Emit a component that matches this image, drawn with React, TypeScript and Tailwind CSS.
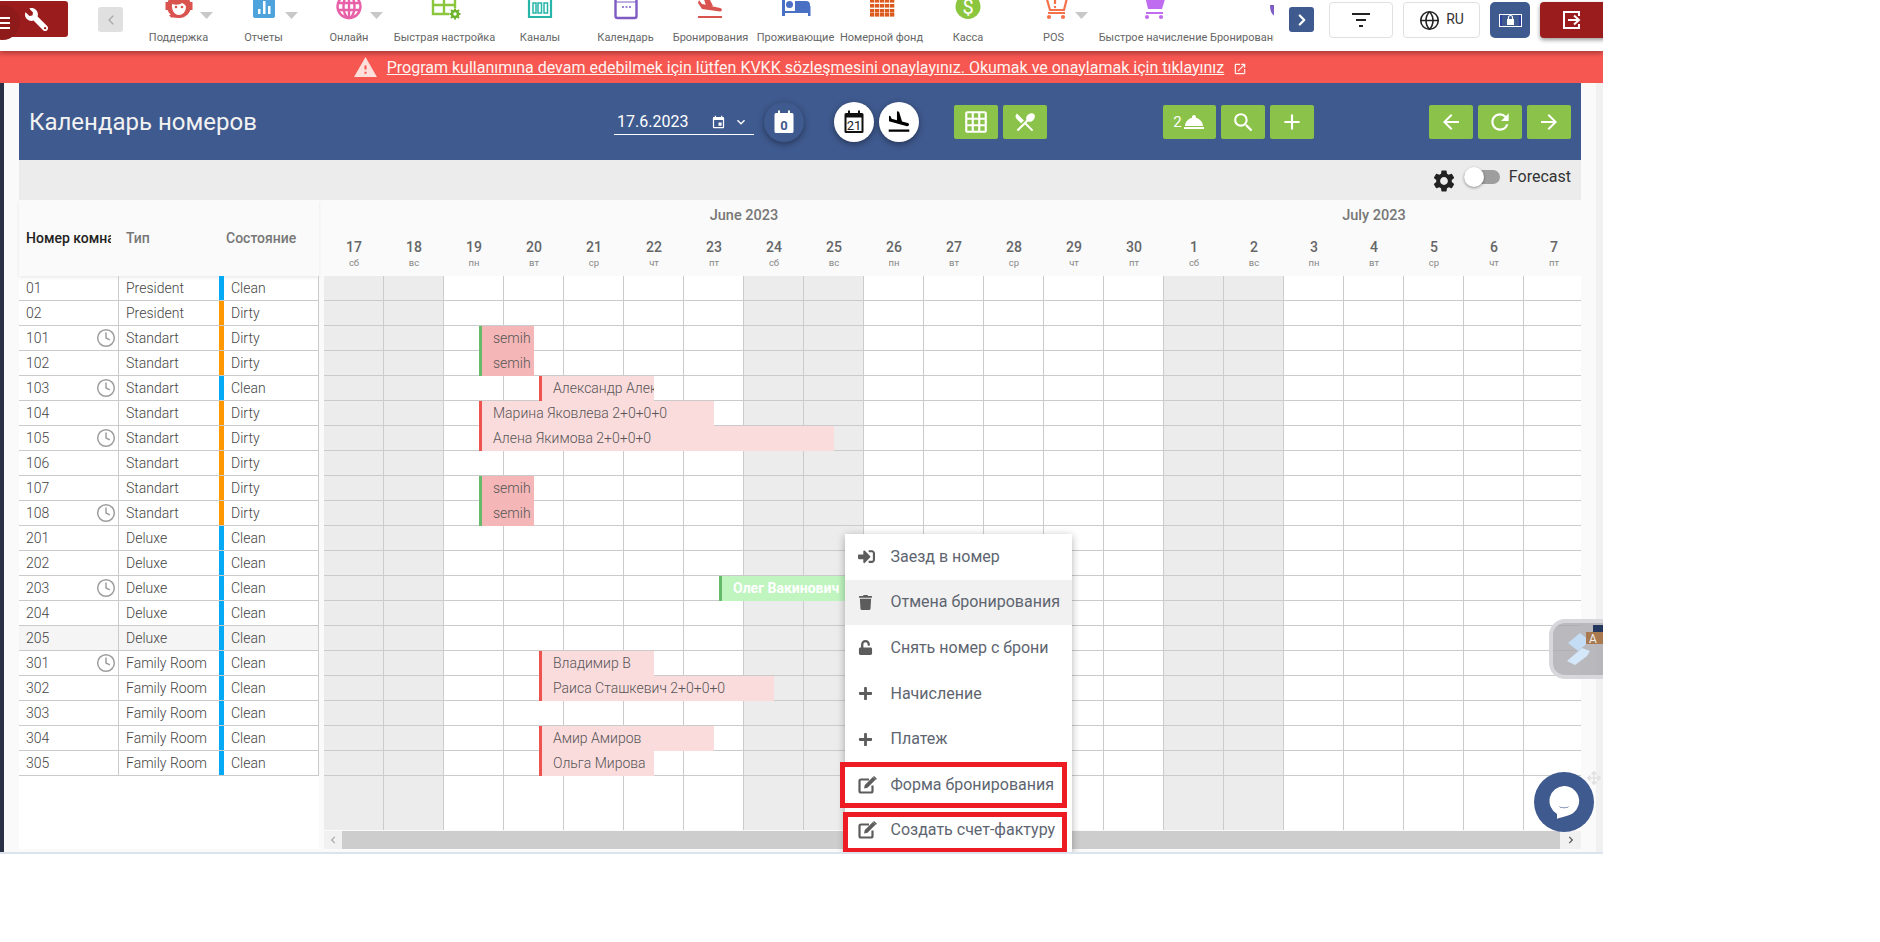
import React from "react";
import { Clock, Globe, ChevronLeft, ChevronRight } from "lucide-react";
import { FaSignInAlt, FaTrash, FaUnlock, FaPlus, FaArrowsAlt, FaChevronLeft, FaChevronRight, FaWrench } from "react-icons/fa";
import { MdFlightLand, MdGridOn, MdLocalDining, MdRoomService, MdSearch, MdAdd, MdArrowBack, MdRefresh, MdArrowForward, MdSettings, MdWarning, MdOpenInNew, MdEvent, MdKeyboardArrowDown } from "react-icons/md";

const Svg = ({ children }: { children: React.ReactNode }) => (
  <svg width="36" height="22" viewBox="0 0 36 22" className="block">{children}</svg>
);

const icons = {
  support: (
    <Svg>
      <circle cx="18" cy="6" r="12" fill="#d9534f" />
      <path d="M11 4c3 1 8 1 10-1 2 1 4 2 4 4a7 8 0 0 1-14 0z" fill="#fff" />
      <circle cx="15" cy="7" r="1.3" fill="#d9534f" /><circle cx="21" cy="7" r="1.3" fill="#d9534f" />
      <path d="M4.500 2h3v8h-3zM28.500 2h3v8h-3z" fill="#d9534f" />
      <path d="M8 15h11l1 2.500H10z" fill="#d9534f" />
    </Svg>
  ),
  reports: (
    <Svg>
      <rect x="7" y="-6" width="22" height="24" rx="2" fill="#4ea3dd" />
      <rect x="12" y="9" width="2.5" height="5" fill="#fff" /><rect x="17" y="1" width="2.5" height="13" fill="#fff" /><rect x="22" y="6" width="2.5" height="8" fill="#fff" />
    </Svg>
  ),
  online: (
    <Svg>
      <g fill="none" stroke="#e860a8" strokeWidth="2.4">
        <circle cx="18" cy="6.5" r="11.5" /><ellipse cx="18" cy="6.5" rx="5.5" ry="11.5" />
        <path d="M7 3h22M7 10h22M18-5v23" />
      </g>
    </Svg>
  ),
  setup: (
    <Svg>
      <g fill="none" stroke="#8cc63f" strokeWidth="2.4">
        <path d="M6-4h22v18H6zM6 5h22M17-4v18" />
      </g>
      <circle cx="28" cy="14" r="6" fill="#fff" />
      <circle cx="28" cy="14" r="3" fill="none" stroke="#6fb52c" strokeWidth="2.6" />
      <path d="M28 8.500v2M28 17.500v2M22.500 14h2M31.500 14h2M24 10l1.500 1.500M30.500 16.500l1.500 1.500M32 10l-1.500 1.500M25.500 16.500L24 18" stroke="#6fb52c" strokeWidth="2" />
    </Svg>
  ),
  channels: (
    <Svg>
      <path d="M7-4h22v21H7z" fill="none" stroke="#26b5a8" strokeWidth="2.2" />
      <path d="M11 3h3v10h-3zM16 3h3.500v10H16zM22 3h3.500v10H22z" fill="none" stroke="#26b5a8" strokeWidth="1.500" />
    </Svg>
  ),
  calendar: (
    <Svg>
      <rect x="7.500" y="-4" width="21" height="22" rx="2" fill="#fff" stroke="#7e5cc4" strokeWidth="2.400" />
      <path d="M7.500 2h21" stroke="#7e5cc4" strokeWidth="1" />
      <path d="M14 7h2M17.500 7h2M21 7h2" stroke="#7e5cc4" strokeWidth="1.600" />
    </Svg>
  ),
  booking: (
    <Svg>
      <path d="M6 0l3 4 18 4c2.500.500 2.500 3.500 0 3.500L9 9 5 3z" fill="#d9534f" />
      <path d="M10-4h5l5 10h-7z" fill="#d9534f" />
      <rect x="5" y="16" width="24" height="2" fill="#d9534f" />
    </Svg>
  ),
  residents: (
    <Svg>
      <path d="M4-2h3v18H4zM30 6h2.500v10H30z" fill="#4a70c4" />
      <circle cx="11.500" cy="4.500" r="3.500" fill="#4a70c4" />
      <path d="M17 1h11a4 4 0 0 1 4 4v6H17z" fill="#4a70c4" />
      <rect x="4" y="11" width="28" height="2" fill="#4a70c4" />
    </Svg>
  ),
  fund: (
    <Svg>
      <g fill="#dd5a1e">
        {[-1, 4, 9, 13].flatMap((y) => [6, 11, 16, 21, 26].map((x) => <rect key={x + "-" + y} x={x} y={y} width="4.300" height="3.600" />))}
      </g>
    </Svg>
  ),
  cash: (
    <Svg>
      <circle cx="18" cy="6.500" r="12.500" fill="#8cc63f" />
      <text x="18" y="14" textAnchor="middle" fontSize="20" fill="#fff" fontFamily="Roboto">$</text>
    </Svg>
  ),
  pos: (
    <Svg>
      <path d="M7-4h3l4 14h14l3-12" fill="none" stroke="#f4714a" strokeWidth="2.200" />
      <path d="M12 13h17" stroke="#f4714a" strokeWidth="2" />
      <circle cx="13" cy="17" r="2.100" fill="#f4714a" /><circle cx="27" cy="17" r="2.100" fill="#f4714a" />
      <path d="M19-2v6" stroke="#f4714a" strokeWidth="2.200" /><circle cx="19" cy="7" r="1.200" fill="#f4714a" />
    </Svg>
  ),
  charge: (
    <Svg>
      <path d="M10-4h21l-4 13H13z" fill="#c06cf0" />
      <path d="M11 13h17" stroke="#c06cf0" strokeWidth="2" />
      <circle cx="12" cy="17" r="2.100" fill="#c06cf0" /><circle cx="26" cy="17" r="2.100" fill="#c06cf0" />
    </Svg>
  ),
};

const tools: { label: string; w: number; icon: React.ReactNode; caret?: boolean }[] = [
  { label: "Поддержка", w: 85, icon: icons.support, caret: true },
  { label: "Отчеты", w: 85, icon: icons.reports, caret: true },
  { label: "Онлайн", w: 86, icon: icons.online, caret: true },
  { label: "Быстрая настройка", w: 105, icon: icons.setup },
  { label: "Каналы", w: 86, icon: icons.channels },
  { label: "Календарь", w: 85, icon: icons.calendar },
  { label: "Бронирования", w: 85, icon: icons.booking },
  { label: "Проживающие", w: 85, icon: icons.residents },
  { label: "Номерной фонд", w: 87, icon: icons.fund },
  { label: "Касса", w: 86, icon: icons.cash },
  { label: "POS", w: 85, icon: icons.pos, caret: true },
  { label: "Быстрое начисление", w: 114, icon: icons.charge },
];

type Room = { no: string; type: string; state: string; clock?: boolean };
const rooms: Room[] = [
  { no: "01", type: "President", state: "Clean" },
  { no: "02", type: "President", state: "Dirty" },
  { no: "101", type: "Standart", state: "Dirty", clock: true },
  { no: "102", type: "Standart", state: "Dirty" },
  { no: "103", type: "Standart", state: "Clean", clock: true },
  { no: "104", type: "Standart", state: "Dirty" },
  { no: "105", type: "Standart", state: "Dirty", clock: true },
  { no: "106", type: "Standart", state: "Dirty" },
  { no: "107", type: "Standart", state: "Dirty" },
  { no: "108", type: "Standart", state: "Dirty", clock: true },
  { no: "201", type: "Deluxe", state: "Clean" },
  { no: "202", type: "Deluxe", state: "Clean" },
  { no: "203", type: "Deluxe", state: "Clean", clock: true },
  { no: "204", type: "Deluxe", state: "Clean" },
  { no: "205", type: "Deluxe", state: "Clean" },
  { no: "301", type: "Family Room", state: "Clean", clock: true },
  { no: "302", type: "Family Room", state: "Clean" },
  { no: "303", type: "Family Room", state: "Clean" },
  { no: "304", type: "Family Room", state: "Clean" },
  { no: "305", type: "Family Room", state: "Clean" },
];

type Booking = { row: number; x: number; w: number; text: string; kind: "semih" | "red" | "green" };
const bookings: Booking[] = [
  { row: 2, x: 155, w: 55, text: "semih", kind: "semih" },
  { row: 3, x: 155, w: 55, text: "semih", kind: "semih" },
  { row: 4, x: 215, w: 115, text: "Александр Александров", kind: "red" },
  { row: 5, x: 155, w: 235, text: "Марина Яковлева 2+0+0+0", kind: "red" },
  { row: 6, x: 155, w: 355, text: "Алена Якимова 2+0+0+0", kind: "red" },
  { row: 8, x: 155, w: 55, text: "semih", kind: "semih" },
  { row: 9, x: 155, w: 55, text: "semih", kind: "semih" },
  { row: 12, x: 395, w: 175, text: "Олег Вакинович", kind: "green" },
  { row: 15, x: 215, w: 115, text: "Владимир В", kind: "red" },
  { row: 16, x: 215, w: 235, text: "Раиса Сташкевич 2+0+0+0", kind: "red" },
  { row: 18, x: 215, w: 175, text: "Амир Амиров", kind: "red" },
  { row: 19, x: 215, w: 115, text: "Ольга Мирова", kind: "red" },
];

const weekdays = ["сб", "вс", "пн", "вт", "ср", "чт", "пт"];
const days = [...Array.from({ length: 14 }, (_, i) => 17 + i), ...Array.from({ length: 7 }, (_, i) => 1 + i)].map((d, i) => ({
  d,
  wd: weekdays[i % 7],
  weekend: i % 7 < 2,
}));

const EditIcon = () => (
  <svg width="19" height="18" viewBox="0 0 19 18">
    <path d="M11 3.500H3A1.500 1.500 0 0 0 1.500 5v10A1.500 1.500 0 0 0 3 16.500h10a1.500 1.500 0 0 0 1.500-1.500V9.500" fill="none" stroke="currentColor" strokeWidth="2.200" />
    <path d="M6 12.500l.800-3.500 8-8 2.700 2.700-8 8z" fill="currentColor" />
    <path d="M15.500.500l2.900 2.900" stroke="currentColor" strokeWidth="1.500" />
  </svg>
);

const menu = [
  { icon: <FaSignInAlt size={17} />, label: "Заезд в номер" },
  { icon: <FaTrash size={15} />, label: "Отмена бронирования", active: true },
  { icon: <FaUnlock size={15} />, label: "Снять номер с брони" },
  { icon: <FaPlus size={15} />, label: "Начисление" },
  { icon: <FaPlus size={15} />, label: "Платеж" },
  { icon: <EditIcon />, label: "Форма бронирования" },
  { icon: <EditIcon />, label: "Создать счет-фактуру" },
];

const GreenBtn = ({ children, wide }: { children: React.ReactNode; wide?: boolean }) => (
  <div className={`flex h-[34px] items-center justify-center rounded-[2px] bg-[#8bc34a] text-white ${wide ? "w-[53px]" : "w-[44px]"}`}>{children}</div>
);

const CalIcon = ({ label, color, textColor, weight, size }: { label: string; color: string; textColor: string; weight: number; size: number }) => (
  <svg width="20" height="24" viewBox="0 0 20 24">
    <path d="M2 3h16a1.500 1.500 0 0 1 1.500 1.500v17a1.500 1.500 0 0 1-1.500 1.500H2a1.500 1.500 0 0 1-1.500-1.500v-17A1.500 1.500 0 0 1 2 3z" fill={color} />
    <rect x="4" y="0.500" width="2" height="4" fill={color} /><rect x="14" y="0.500" width="2" height="4" fill={color} />
    <rect x="2.500" y="7.500" width="15" height="13.500" fill="#fff" />
    <text x="10" y="19.500" textAnchor="middle" fontSize={size} fontWeight={weight} fontFamily="Roboto" fill={textColor}>{label}</text>
  </svg>
);

export default function App() {
  return (
    <div className="relative h-[942px] w-[1880px] overflow-hidden bg-white font-['Roboto',sans-serif]">
      <div className="relative flex h-[854px] w-[1603px] flex-col overflow-hidden border-b-2 border-[#dbe4ee] bg-[#fafafa]">
        {/* toolbar */}
        <header className="relative z-20 flex h-[51px] shrink-0 items-start bg-white shadow-[0_2px_5px_rgba(0,0,0,0.35)]">
          <div className="mt-px flex h-[36px] w-[68px] shrink-0 items-center justify-end rounded-r-[3px] bg-[#9b1c1c] pr-[20px] text-white">
            <FaWrench size={23} className="-scale-x-100" />
          </div>
          <div className="ml-[30px] mt-[7px] flex h-[25px] w-[25px] shrink-0 items-center justify-center rounded-[3px] bg-[#e0e0e0] text-[#aaa]">
            <ChevronLeft size={16} />
          </div>
          <div className="ml-[13px] flex h-[51px] w-[1138px] shrink-0 overflow-hidden">
            {tools.map((t) => (
              <div key={t.label} className="relative shrink-0" style={{ width: t.w }}>
                <div className="flex h-[22px] justify-center">{t.icon}</div>
                {t.caret && (
                  <svg width="13" height="7" viewBox="0 0 13 7" className="absolute left-[calc(50%+21px)] top-[12px]"><path d="M0 0h13L6.500 7z" fill="#c8c8c8" /></svg>
                )}
                <div className="mt-[9px] whitespace-nowrap text-center text-[11px] leading-[14px] text-[#666]">{t.label}</div>
              </div>
            ))}
            <div className="relative w-[64px] shrink-0 overflow-hidden">
              <svg width="8" height="22" viewBox="0 0 8 22" className="ml-[60px] block"><path d="M0 5h5v11C2 15 0 11 0 5z" fill="#7e5cc4" /></svg>
              <div className="mt-[9px] whitespace-nowrap text-[11px] leading-[14px] text-[#666]">Бронирования</div>
            </div>
          </div>
          <div className="ml-[15px] mt-[7px] flex h-[25px] w-[25px] shrink-0 items-center justify-center rounded-[3px] bg-[#3f5a8f] text-white">
            <ChevronRight size={18} strokeWidth={3} />
          </div>
          <div className="ml-[15px] mt-[2px] flex h-[36px] w-[64px] shrink-0 items-center justify-center rounded-[4px] border border-[#e0e0e0]">
            <svg width="18" height="14" viewBox="0 0 18 14"><path d="M0 0h18v2H0zM4 6h10v2H4zM7 12h4v2H7z" fill="#222" /></svg>
          </div>
          <div className="ml-[10px] mt-[2px] flex h-[36px] w-[77px] shrink-0 items-center justify-center gap-[6px] rounded-[4px] border border-[#e0e0e0] text-[14px] text-[#333]">
            <Globe size={21} strokeWidth={1.800} className="text-[#222]" />
            <span className="mb-[2px]">RU</span>
          </div>
          <div className="ml-[10px] mt-[2px] flex h-[36px] w-[40px] shrink-0 items-center justify-center rounded-[5px] bg-[#3f5a8f]">
            <svg width="23" height="13" viewBox="0 0 23 13"><rect width="23" height="13" fill="#fff" /><rect x="1" y="1" width="21" height="11" fill="#2f3f9f" /><rect x="3" y="1" width="17" height="11" fill="#3f5a8f" /><rect x="8" y="5" width="7" height="6" fill="#fff" /><path d="M9.500 5V3.500a2 2 0 0 1 4 0V5" fill="none" stroke="#fff" strokeWidth="1.200" /></svg>
          </div>
          <div className="ml-[10px] mt-[2px] flex h-[36px] w-[70px] shrink-0 items-center rounded-[4px] bg-[#9b1c1c] pl-[23px] shadow-[0_2px_4px_rgba(0,0,0,0.4)]">
            <svg width="18" height="18" viewBox="0 0 18 18"><path d="M16 5V1H1v16h15v-4" fill="none" stroke="#fff" strokeWidth="2" /><path d="M5 9h11M11 4.500 16 9l-5 4.500" fill="none" stroke="#fff" strokeWidth="2" /></svg>
          </div>
        </header>

        {/* hamburger */}
        <div className="absolute left-[-15px] top-[5px] z-30 flex h-[35px] w-[35px] flex-col items-end justify-center gap-[3px] rounded-full bg-[#8f1a1a] pr-[10px]">
          <span className="block h-[2px] w-[10px] bg-white" />
          <span className="block h-[2px] w-[10px] bg-white" />
          <span className="block h-[2px] w-[10px] bg-white" />
        </div>

        {/* banner */}
        <div className="flex h-[32px] shrink-0 items-center justify-center bg-[#f65751] pr-[3px] pt-[1px] text-[#fff3f0]">
          <MdWarning size={25} className="mr-[9px] text-[#fde0dc]" />
          <span className="whitespace-nowrap text-[16px] font-normal leading-[20px] underline">Program kullanımına devam edebilmek için lütfen KVKK sözleşmesini onaylayınız. Okumak ve onaylamak için tıklayınız</span>
          <MdOpenInNew size={14} className="ml-[9px] mt-[2px]" />
        </div>

        {/* body */}
        <div className="flex min-h-0 flex-1">
          <div className="w-[4px] shrink-0 bg-[#2a3045]" />
          <main className="ml-[15px] w-[1562px] shrink-0">
            {/* blue header */}
            <div className="flex h-[77px] bg-[#3f5a8f] pl-[10px] text-white">
              <h1 className="mt-[23px] w-[585px] shrink-0 text-[24px] font-normal leading-[32px] text-[#f2f2f2]">Календарь номеров</h1>
              <div className="mt-[21px] flex h-[31px] w-[140px] shrink-0 items-center border-b border-white pl-[3px] pt-[6px] text-[16px]">
                <span>17.6.2023</span>
                <MdEvent size={15} className="ml-[23px]" />
                <MdKeyboardArrowDown size={16} className="ml-[7px]" />
              </div>
              <div className="ml-[10px] mt-[19px] flex h-[40px] w-[40px] shrink-0 items-center justify-center rounded-full bg-[#3f5a8f] shadow-[0_2px_6px_rgba(0,0,0,0.4)]">
                <CalIcon label="0" color="#fff" textColor="#3f5a8f" weight={700} size={13} />
              </div>
              <div className="ml-[30px] mt-[19px] flex h-[40px] w-[40px] shrink-0 items-center justify-center rounded-full bg-white shadow-[0_2px_6px_rgba(0,0,0,0.4)]">
                <CalIcon label="21" color="#111" textColor="#222" weight={400} size={13} />
              </div>
              <div className="ml-[5px] mt-[19px] flex h-[40px] w-[40px] shrink-0 items-center justify-center rounded-full bg-white text-black shadow-[0_2px_6px_rgba(0,0,0,0.4)]">
                <MdFlightLand size={26} />
              </div>
              <div className="ml-[35px] mt-[22px] flex shrink-0 gap-[5px]">
                <GreenBtn><MdGridOn size={26} /></GreenBtn>
                <GreenBtn><MdLocalDining size={24} /></GreenBtn>
              </div>
              <div className="ml-[116px] mt-[22px] flex shrink-0 gap-[5px]">
                <GreenBtn wide><span className="text-[15px]">2</span><MdRoomService size={24} /></GreenBtn>
                <GreenBtn><MdSearch size={25} /></GreenBtn>
                <GreenBtn><MdAdd size={26} /></GreenBtn>
              </div>
              <div className="ml-[115px] mt-[22px] flex shrink-0 gap-[5px]">
                <GreenBtn><MdArrowBack size={24} /></GreenBtn>
                <GreenBtn><MdRefresh size={26} /></GreenBtn>
                <GreenBtn><MdArrowForward size={24} /></GreenBtn>
              </div>
            </div>

            {/* gray bar */}
            <div className="flex h-[40px] items-start justify-end bg-[#ececec] pr-[10px]">
              <MdSettings size={26} className="mr-[7px] mt-[8px] text-[#222]" />
              <div className="relative mr-[9px] mt-[10px] h-[14px] w-[36px] rounded-full bg-[#9e9e9e]">
                <span className="absolute left-0 top-[-3px] h-[20px] w-[20px] rounded-full bg-white shadow-[0_1px_3px_rgba(0,0,0,0.4)]" />
              </div>
              <span className="mt-[7px] text-[16px] leading-[20px] text-[#333]">Forecast</span>
            </div>

            <div className="flex">
              {/* rooms table */}
              <div className="w-[300px] shrink-0 bg-white">
                <div className="flex h-[76px] items-center bg-[#fafafa] text-[14px] font-medium text-[#777] shadow-[0_2px_3px_rgba(0,0,0,0.08)]">
                  <div className="w-[92px] shrink-0 overflow-hidden whitespace-nowrap pl-[7px] text-[#222]">Номер комнаты</div>
                  <div className="ml-[15px] w-[100px] shrink-0">Тип</div>
                  <div>Состояние</div>
                </div>
                {rooms.map((r) => (
                  <div key={r.no} className={`flex h-[25px] border-b border-[#cbcbcb] text-[14px] font-light text-[#444] ${r.no === "205" ? "bg-[#f5f5f5]" : ""}`}>
                    <div className="flex w-[100px] shrink-0 items-center justify-between border-r border-[#cbcbcb] pl-[7px] pr-[2px]">
                      <span>{r.no}</span>
                      {r.clock && <Clock size={20} strokeWidth={1.800} className="text-[#9e9e9e]" />}
                    </div>
                    <div className="flex w-[100px] shrink-0 items-center whitespace-nowrap pl-[7px]">{r.type}</div>
                    <div className="flex flex-1 items-center border-r border-[#cbcbcb]">
                      <span className={`h-full w-[5px] ${r.state === "Clean" ? "bg-[#03a9f4]" : "bg-[#ff9800]"}`} />
                      <span className="pl-[7px]">{r.state}</span>
                    </div>
                  </div>
                ))}
              </div>

              {/* calendar */}
              <div className="ml-[5px] w-[1257px] shrink-0 overflow-hidden">
                <div className="w-[1260px]">
                  <div className="h-[76px] bg-[#fafafa] shadow-[0_2px_3px_rgba(0,0,0,0.08)]">
                    <div className="flex h-[26px] items-end text-[14.500px] font-medium leading-[20px] text-[#777]">
                      <div className="w-[840px] text-center">June 2023</div>
                      <div className="w-[420px] text-center">July 2023</div>
                    </div>
                    <div className="mt-[12px] flex">
                      {days.map((d) => (
                        <div key={d.wd + d.d} className="w-[60px] text-center">
                          <div className="text-[14px] font-medium leading-[18px] text-[#666]">{d.d}</div>
                          <div className="text-[9.500px] leading-[13px] text-[#888]">{d.wd}</div>
                        </div>
                      ))}
                    </div>
                  </div>
                  {rooms.map((r, ri) => (
                    <div key={r.no} className="relative flex h-[25px]">
                      {days.map((d) => (
                        <div key={d.wd + d.d} className={`h-[25px] w-[60px] border-b border-r border-[#cbcbcb] ${d.weekend ? "bg-[#ececec]" : "bg-white"}`} />
                      ))}
                      {bookings
                        .filter((b) => b.row === ri)
                        .map((b) => (
                          <div
                            key={b.row}
                            className={`absolute top-0 h-[25px] overflow-hidden whitespace-nowrap border-l-[3px] pl-[11px] text-[14px] leading-[24px] ${
                              b.kind === "semih"
                                ? "border-[#66bb6a] bg-[#f4b6b6] font-light text-[#555]"
                                : b.kind === "red"
                                ? "border-[#ef5350] bg-[#fbdcdd] font-light text-[#555]"
                                : "border-[#66bb6a] bg-[#c0f5c0] font-bold text-white"
                            }`}
                            style={{ left: b.x, width: b.w }}
                          >
                            {b.text}
                          </div>
                        ))}
                    </div>
                  ))}
                  <div className="flex h-[54px]">
                    {days.map((d) => (
                      <div key={d.wd + d.d} className={`h-[54px] w-[60px] border-r border-[#cbcbcb] ${d.weekend ? "bg-[#ececec]" : "bg-white"}`} />
                    ))}
                  </div>
                </div>
                <div className="mt-px flex h-[18px] w-[1257px]">
                  <div className="flex w-[18px] shrink-0 items-center justify-center bg-[#f1f1f1] text-[#aaa]"><FaChevronLeft size={8} /></div>
                  <div className="flex-1 bg-[#cdcdcd]" />
                  <div className="flex w-[21px] shrink-0 items-center justify-center bg-[#f1f1f1] text-[#555]"><FaChevronRight size={8} /></div>
                </div>
              </div>
            </div>
          </main>
          <div className="ml-[15px] w-[7px] shrink-0 bg-[#f1f1f1]" />
        </div>

        {/* floating satellite widget */}
        <div className="absolute left-[1549px] top-[619px] z-10 h-[60px] w-[70px] rounded-[16px] border-[4px] border-[#d8d8dc] bg-[#a8a8ae]/80">
          <svg width="50" height="52" viewBox="0 0 50 52" className="absolute left-0 top-0">
            <path d="M15 20L27 10l10 8-12 10z" fill="#c4dcf4" />
            <path d="M14 38l15-13 8 3-3 5-12 9z" fill="#d4e8fa" />
            <rect x="33" y="9" width="17" height="12" fill="#a9794f" />
            <text x="40" y="19.500" textAnchor="middle" fontSize="12" fill="#eee" fontFamily="Roboto">A</text>
            <rect x="40" y="2" width="10" height="7" fill="#24375f" />
          </svg>
        </div>

        {/* chat */}
        <div className="absolute left-[1534px] top-[772px] z-10 flex h-[60px] w-[60px] items-center justify-center rounded-full bg-[#3f5a8f]">
          <svg width="32" height="34" viewBox="0 0 32 34">
            <path d="M16 1a15 15 0 0 1 4 29.500C16 32 10 33 9 34l0-5A15 15 0 0 1 16 1z" fill="#fff" />
            <path d="M11 21c3 2 7 2 10 0-1 3-9 3-10 0z" fill="#3f5a8f" />
          </svg>
        </div>
        <FaArrowsAlt size={14} className="absolute left-[1587px] top-[771px] z-10 text-[#e2e2e2]" />

        {/* context menu */}
        <div className="absolute left-[845px] top-[534px] z-20 h-[320px] w-[227px] bg-white shadow-[0_2px_8px_rgba(0,0,0,0.3)]">
          {menu.map((m) => (
            <div key={m.label} className={`flex h-[45.600px] items-center text-[16px] text-[#5e6570] ${m.active ? "bg-[#f1f1f1]" : ""}`}>
              <span className="flex w-[45.500px] shrink-0 justify-start pl-[13px] text-[#5c5c5c]">{m.icon}</span>
              <span className="whitespace-nowrap">{m.label}</span>
            </div>
          ))}
        </div>
        <div className="absolute left-[840px] top-[762px] z-20 h-[46px] w-[227px] border-[5px] border-[#ed1c24]" />
        <div className="absolute left-[843px] top-[812px] z-20 h-[41px] w-[224px] border-[5px] border-[#ed1c24]" />
      </div>
    </div>
  );
}
